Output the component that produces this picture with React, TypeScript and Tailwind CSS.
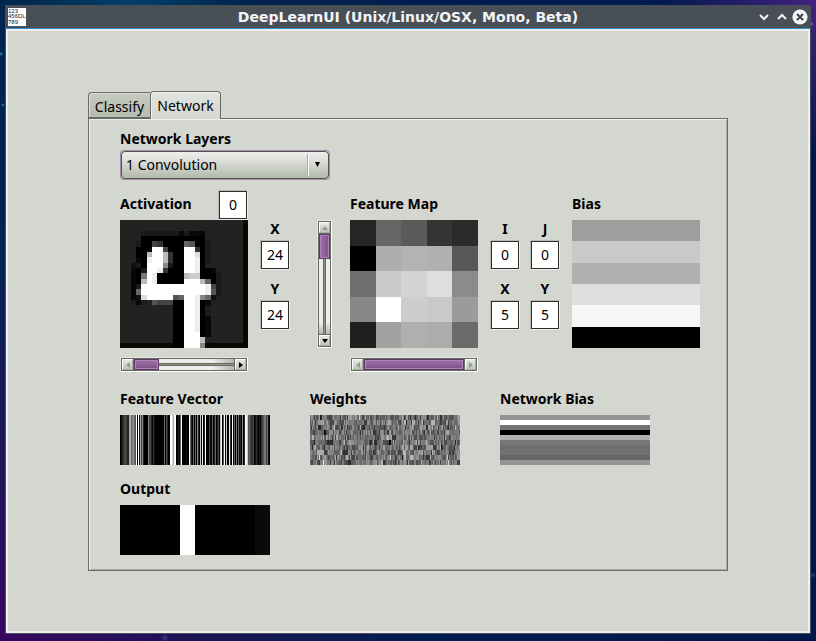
import type { ReactNode } from 'react';

// One character per cell; hex digits are grey levels, ':' and '.' are near-blacks.
const ACTIVATION = [
  '22222222222222222222222.',
  '22222222222222222222222.',
  '2222:::::::.:...2222222.',
  '22220000000000002222222.',
  '222:004300006500:222222.',
  '22200.ff4000ff30:222222.',
  '22200bffb300ffd0:222222.',
  '222.0effb300ffe0:222222.',
  '221:0fff8:00ffe02222222.',
  '22.0:ffe3000ffe00.22222.',
  '22.07fe00000bcc000:2222.',
  '22.0bfe00000fffb60:2222.',
  '22.:ffffffffffffe4:2222.',
  '22.6ffffffffffffe5:2222.',
  '22.1dfffff56ffe86122222.',
  '22:.:2544400ffe0.222222.',
  '222222222200ffe0:222222.',
  '222222222200ffe0:222222.',
  '222222222200ffe0.222222.',
  '222222222200ffe0.222222.',
  '222222222200ffe0.222222.',
  '222222222200fff0.222222.',
  '222222222200fffb2222222.',
  '..........00fff8........',
];

const FEATURE_MAP = [
  ['#252525', '#666666', '#5a5a5a', '#343434', '#2b2b2b'],
  ['#000000', '#aeaeae', '#b3b3b3', '#b0b0b0', '#585858'],
  ['#707070', '#cacaca', '#d3d3d3', '#dedede', '#8b8b8b'],
  ['#888888', '#ffffff', '#cdcdcd', '#c9c9c9', '#9b9b9b'],
  ['#202020', '#a2a2a2', '#afafaf', '#acacac', '#6a6a6a'],
];

const BIAS = [['#9e9e9e'], ['#c9c9c9'], ['#b0b0b0'], ['#dedede'], ['#f7f7f7'], ['#000000']];

const NETWORK_BIAS = [
  ['#949494'], ['#ffffff'], ['#737373'], ['#000000'], ['#b0b0b0'],
  ['#777777'], ['#6e6e6e'], ['#727272'], ['#656565'], ['#949494'],
];

const OUTPUT = [['#000', '#000', '#000', '#000', '#fff', '#000', '#000', '#000', '#000', '#0a0a0a']];

const FEATURE_VECTOR =
  '01234442' + '2aa68865' + 'f0f1a482' + '00008442' + '03100000' + '00006052' +
  '00ffdaff' + '00206f00' + '00100f62' + '06060820' + 'c0e02f00' + '04106026' +
  '0240ce05' + 'f0c00e30' + 'f0607061' + '20802fec' + '56433401' + '31020345' + '774610';

const grey = (c: string) => (c === '.' ? '#080808' : c === ':' ? '#1a1a1a' : `#${c}${c}${c}`);

// Small repeatable noise for the weight matrix.
function makeWeights(): string[][] {
  let seed = 20177;
  const next = () => {
    seed = (seed * 1103515245 + 12345) % 2147483648;
    return seed / 2147483648;
  };
  const rows: string[][] = [];
  for (let r = 0; r < 10; r += 1) {
    const row: string[] = [];
    let level = 112;
    for (let c = 0; c < 150; c += 1) {
      if (next() > 0.3) {
        const spread = (next() + next() + next()) / 3 - 0.5;
        level = Math.round(112 + spread * 190);
      }
      row.push(`rgb(${level},${level},${level})`);
    }
    rows.push(row);
  }
  rows[0][49] = '#d0d0d0';
  rows[2][24] = '#d0d0d0';
  rows[3][14] = '#000';
  rows[3][15] = '#181818';
  rows[4][77] = '#c8c8c8';
  rows[5][79] = '#000';
  rows[5][80] = '#080808';
  rows[8][9] = '#e0e0e0';
  rows[8][80] = '#dadada';
  rows[9][13] = '#fff';
  rows[9][138] = '#d8d8d8';
  return rows;
}

const WEIGHTS = makeWeights();
const ACTIVATION_CELLS = ACTIVATION.map((row) => [...row].map(grey));
const VECTOR_CELLS = [[...FEATURE_VECTOR].map(grey)];

function Heatmap({ cells, label, className }: { cells: string[][]; label: string; className: string }) {
  const cols = cells[0].length;
  return (
    <svg
      role="img"
      aria-label={label}
      viewBox={`0 0 ${cols} ${cells.length}`}
      preserveAspectRatio="none"
      shapeRendering="crispEdges"
      className={`block ${className}`}
    >
      {cells.map((row, y) =>
        row.map((fill, x) => <rect key={`${x}-${y}`} x={x} y={y} width={1} height={1} fill={fill} />),
      )}
    </svg>
  );
}

function NumberBox({ id, value }: { id: string; value: string }) {
  return (
    <div className="size-[30px] border border-t-[#b9bbb5] border-r-[#ecedea] border-b-[#ecedea] border-l-[#b9bbb5]">
      <input
        id={id}
        defaultValue={value}
        className="block size-7 border border-[#2d2d2d] bg-white pb-0.5 text-center text-sm text-black outline-none"
      />
    </div>
  );
}

function Field({ id, label, value }: { id: string; label: string; value: string }) {
  return (
    <div className="flex w-[30px] flex-col items-center">
      <label htmlFor={id} className="h-5 leading-[18px] font-bold">
        {label}
      </label>
      <NumberBox id={id} value={value} />
    </div>
  );
}

type Direction = 'left' | 'right' | 'up' | 'down';

const ARROWS: Record<Direction, string> = {
  left: 'M2 4 6 1v6z',
  right: 'M6 4 2 1v6z',
  up: 'M4 2 7 6H1z',
  down: 'M4 6 7 2H1z',
};

function ArrowButton({ direction, disabled }: { direction: Direction; disabled?: boolean }) {
  return (
    <button
      type="button"
      aria-label={`Scroll ${direction}`}
      disabled={disabled}
      className="flex size-[11px] shrink-0 items-center justify-center border border-t-white border-r-[#a9ada3] border-b-[#a9ada3] border-l-white bg-linear-to-b from-[#e6e8e3] to-[#bfc4b9]"
    >
      <svg viewBox="0 0 8 8" className="size-2 shrink-0">
        <path d={ARROWS[direction]} className={disabled ? 'fill-[#959a8d]' : 'fill-black'} />
      </svg>
    </button>
  );
}

function HorizontalScroll({ full }: { full?: boolean }) {
  return (
    <div className="mt-[9px] h-[15px] border border-t-[#e4e6e1] border-r-white border-b-white border-l-[#e4e6e1]">
      <div className="flex h-[13px] border border-[#666b60] bg-[#eeeeee]">
        <div className="border-r border-[#666b60]">
          <ArrowButton direction="left" disabled />
        </div>
        <div
          className={`border border-[#5f3a66] bg-linear-to-b from-[#a86fb0] to-[#795180] shadow-[inset_0_0_0_1px_#b080b8] ${full ? 'flex-1' : 'w-[25px]'}`}
        />
        {!full && (
          <div className="flex flex-1 items-center bg-linear-to-r from-[#eeeeee] from-70% to-[#b4b4b4]">
            <div className="h-[3px] w-full border-y border-[#666b60] bg-[#8f9887]" />
          </div>
        )}
        <div className="border-l border-[#666b60]">
          <ArrowButton direction="right" disabled={full} />
        </div>
      </div>
    </div>
  );
}

function VerticalScroll() {
  return (
    <div className="h-32 w-[15px] border border-t-[#e4e6e1] border-r-white border-b-white border-l-[#e4e6e1]">
      <div className="flex h-full flex-col border border-[#666b60] bg-[#eeeeee]">
        <div className="border-b border-[#666b60]">
          <ArrowButton direction="up" disabled />
        </div>
        <div className="h-[25px] border border-[#5f3a66] bg-linear-to-r from-[#a86fb0] to-[#795180] shadow-[inset_0_0_0_1px_#b080b8]" />
        <div className="flex flex-1 justify-center bg-linear-to-b from-[#eeeeee] from-85% to-[#b4b4b4]">
          <div className="w-[3px] border-x border-[#666b60] bg-[#8f9887]" />
        </div>
        <div className="border-t border-[#666b60]">
          <ArrowButton direction="down" />
        </div>
      </div>
    </div>
  );
}

function Section({ title, children }: { title: string; children: ReactNode }) {
  return (
    <section className="w-[150px]">
      <h2 className="mb-1.5 h-5 leading-5 font-bold whitespace-nowrap">{title}</h2>
      {children}
    </section>
  );
}

function TitleBar() {
  return (
    <header className="grid h-[22px] grid-cols-[1fr_auto_1fr] items-center px-0.5 text-[#f3f4f5]">
      <svg viewBox="0 0 18 18" className="size-[18px]" aria-hidden="true">
        <rect width="18" height="18" fill="#fff" />
        <g fill="#222" fontFamily="Liberation Sans" fontSize="6">
          <text x="0" y="5">123</text>
          <text x="0" y="10">456</text>
          <text x="0" y="16">789</text>
          <text x="10" y="10">DL</text>
        </g>
      </svg>
      <h1 className="font-['DejaVu_Sans',sans-serif] text-sm leading-5 font-bold whitespace-nowrap">
        DeepLearnUI (Unix/Linux/OSX, Mono, Beta)
      </h1>
      <div className="flex justify-end gap-0.5">
        <button type="button" aria-label="Minimize" className="size-4">
          <svg viewBox="0 0 16 16" className="size-4" fill="none" stroke="currentColor" strokeWidth="2">
            <path d="m4 6 4 4 4-4" />
          </svg>
        </button>
        <button type="button" aria-label="Maximize" className="size-4">
          <svg viewBox="0 0 16 16" className="size-4" fill="none" stroke="currentColor" strokeWidth="2">
            <path d="m4 10 4-4 4 4" />
          </svg>
        </button>
        <button type="button" aria-label="Close" className="size-4">
          <svg viewBox="0 0 16 16" className="size-4">
            <circle cx="8" cy="8" r="7.6" fill="currentColor" />
            <path d="m5 5 6 6m0-6-6 6" stroke="#3f464e" strokeWidth="2" />
          </svg>
        </button>
      </div>
    </header>
  );
}

function NetworkPanel() {
  return (
    <div
      role="tabpanel"
      aria-labelledby="tab-network"
      className="border border-[#696c64] pt-2.5 pb-[15px] pl-[31px] shadow-[inset_1px_1px_0_#eff0ed,inset_-1px_-1px_0_#a9ada3]"
    >
      <label htmlFor="layer" className="block h-5 leading-5 font-bold">
        Network Layers
      </label>
      <div className="relative mt-px h-[30px] w-[210px] rounded-[3px] border border-[#a58bab]">
        <select
          id="layer"
          className="block h-7 w-full appearance-none rounded-sm border border-[#50534b] bg-linear-to-b from-[#eff0ee] via-[#d3d6cf] to-[#b3b9ab] pr-7 pl-1 text-sm text-black outline-none"
        >
          <option>1 Convolution</option>
        </select>
        <span className="pointer-events-none absolute inset-y-[3px] right-5 w-0.5 border-l border-[#a9ada3] bg-white" />
        <svg viewBox="0 0 5 5" className="pointer-events-none absolute top-[11px] right-[9px] size-[5px]">
          <path d="M0 0h5L2.5 5z" />
        </svg>
      </div>

      <div className="mt-2.5 flex">
        <section className="w-32">
          <div className="flex h-[30px] justify-between">
            <label htmlFor="activation" className="leading-7 font-bold">
              Activation
            </label>
            <NumberBox id="activation" value="0" />
          </div>
          <Heatmap cells={ACTIVATION_CELLS} label="Activation" className="size-32" />
          <HorizontalScroll />
        </section>
        <div className="mt-[30px] ml-3 flex flex-col gap-2.5">
          <Field id="activation-x" label="X" value="24" />
          <Field id="activation-y" label="Y" value="24" />
        </div>
        <div className="mt-[30px] ml-[27px]">
          <VerticalScroll />
        </div>
        <section className="ml-[18px] w-32">
          <h2 className="h-[30px] leading-7 font-bold">Feature Map</h2>
          <Heatmap cells={FEATURE_MAP} label="Feature map" className="size-32" />
          <HorizontalScroll full />
        </section>
        <div className="mt-[30px] ml-3 grid grid-cols-2 gap-2.5 self-start">
          <Field id="map-i" label="I" value="0" />
          <Field id="map-j" label="J" value="0" />
          <Field id="map-x" label="X" value="5" />
          <Field id="map-y" label="Y" value="5" />
        </div>
        <section className="ml-3 w-32">
          <h2 className="h-[30px] leading-7 font-bold">Bias</h2>
          <Heatmap cells={BIAS} label="Bias" className="size-32" />
        </section>
      </div>

      <div className="mt-[17px] flex gap-10">
        <Section title="Feature Vector">
          <Heatmap cells={VECTOR_CELLS} label="Feature vector" className="h-[50px] w-full" />
        </Section>
        <Section title="Weights">
          <Heatmap cells={WEIGHTS} label="Weights" className="h-[50px] w-full" />
        </Section>
        <Section title="Network Bias">
          <Heatmap cells={NETWORK_BIAS} label="Network bias" className="h-[50px] w-full" />
        </Section>
      </div>

      <div className="mt-3.5">
        <Section title="Output">
          <Heatmap cells={OUTPUT} label="Output" className="h-[50px] w-full" />
        </Section>
      </div>
    </div>
  );
}

export default function App() {
  return (
    <div className="flex min-h-screen bg-[radial-gradient(circle_at_1px_54px,#3f8fc8,transparent_2px),radial-gradient(circle_at_3px_105px,#2f7fb8,transparent_2px),radial-gradient(circle_at_812px_24px,#9060d0,transparent_2px),radial-gradient(circle_at_165px_638px,#3a3a8c,transparent_4px),radial-gradient(circle_at_813px_575px,#0f5080,transparent_3px),radial-gradient(circle_at_top_right,#43227f,transparent_160px),radial-gradient(circle_at_bottom_left,#36085f,transparent_40%),radial-gradient(circle_at_130px_0px,#044066,transparent_120px),linear-gradient(90deg,#00264f,#00174c)] px-[5px] pt-[5px] pb-[7px] font-['Noto_Sans',sans-serif] text-sm text-black">
      <div className="flex flex-1 flex-col bg-[#484f57] p-px">
        <TitleBar />
        <main className="flex-1 border-t border-[#2d8fd0]">
          <div className="h-full border-2 border-[#eeefee] bg-[#d4d7d0] px-20 pt-15">
            <div role="tablist" className="relative z-10 -mb-px flex items-end">
              <button
                type="button"
                role="tab"
                aria-selected="false"
                className="mb-px h-[26px] w-[62px] rounded-tl-sm border border-r-0 border-[#696c64] bg-linear-to-b from-[#c6cac0] to-[#b6bcae] pt-0.5 text-sm leading-6 shadow-[inset_1px_1px_0_#d9dcd5]"
              >
                Classify
              </button>
              <button
                id="tab-network"
                type="button"
                role="tab"
                aria-selected="true"
                className="h-7 w-[71px] rounded-t-sm border border-b-0 border-[#696c64] bg-linear-to-b from-[#e2e4df] to-[#d4d7d0] text-sm leading-6 shadow-[inset_1px_1px_0_#eff0ed]"
              >
                Network
              </button>
            </div>
            <NetworkPanel />
          </div>
        </main>
      </div>
    </div>
  );
}
